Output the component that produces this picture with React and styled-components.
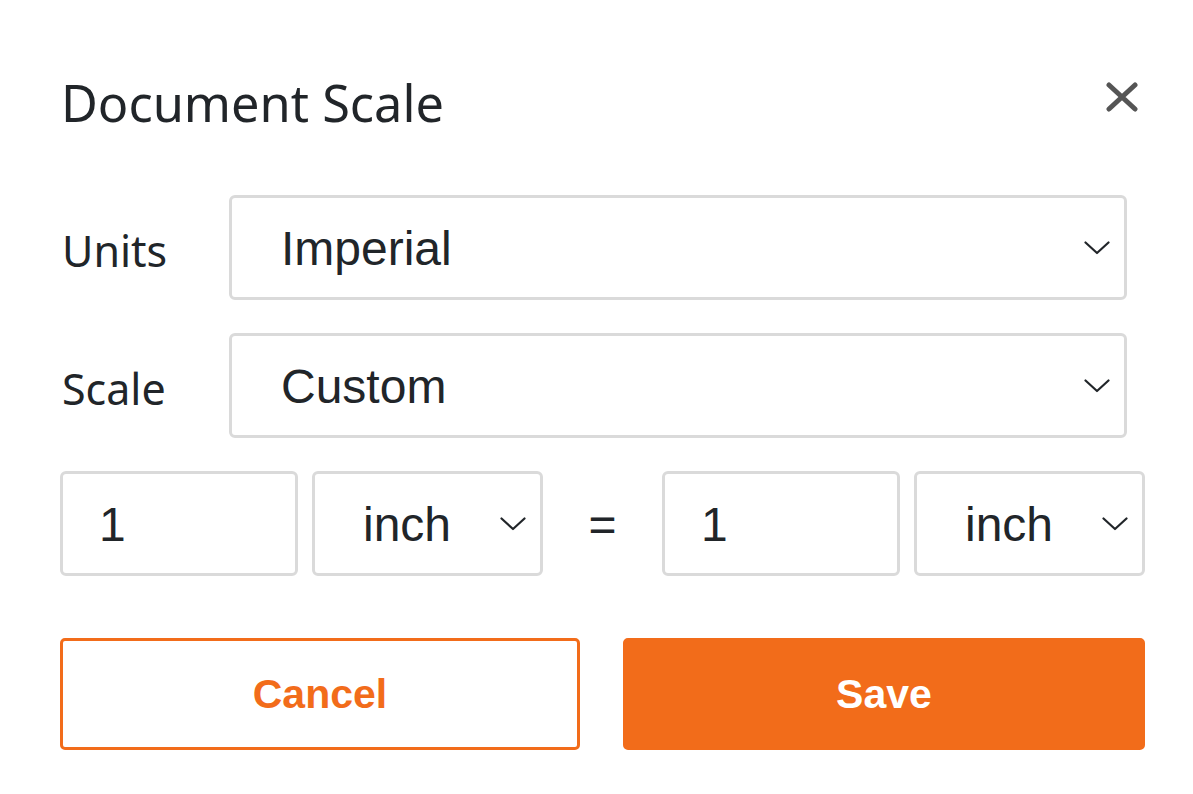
import styled, { createGlobalStyle } from "styled-components";

const GlobalStyle = createGlobalStyle`
  * {
    box-sizing: border-box;
  }
  body {
    margin: 0;
    background: #ffffff;
    font-family: "Liberation Sans", Arial, sans-serif;
    color: #212529;
  }
`;

const orange = "#f26c1a";
const border = "#dadada";

const Dialog = styled.div`
  width: 1193px;
  height: 794px;
  padding: 72px 48px 0 60px;
  display: flex;
  flex-direction: column;
`;

const Header = styled.header`
  display: flex;
  justify-content: space-between;
  align-items: center;
  height: 61px;
`;

const Title = styled.h1`
  margin: 0 0 0 1px;
  font-family: "Noto Sans", "Open Sans", sans-serif;
  font-weight: 400;
  font-size: 50.5px;
  line-height: 61px;
  color: #212529;
`;

const CloseButton = styled.button`
  border: none;
  background: none;
  padding: 0;
  width: 34px;
  height: 34px;
  margin-right: 6px;
  margin-top: -12px;
  display: flex;
  align-items: center;
  justify-content: center;
  cursor: pointer;
`;

const Form = styled.div`
  margin-top: 62px;
  display: flex;
  flex-direction: column;
  gap: 33px;
`;

const FieldRow = styled.div`
  display: grid;
  grid-template-columns: 169px 898px;
  align-items: center;
`;

const Label = styled.label`
  font-family: "Noto Sans", "Open Sans", sans-serif;
  font-size: 43px;
  padding-left: 2px;
  padding-top: 6px;
  color: #212529;
`;

const SelectBox = styled.div`
  height: 105px;
  border: 3px solid ${border};
  border-radius: 6px;
  display: flex;
  align-items: center;
  justify-content: space-between;
  padding: 0 ${(p) => p.$right}px 0 ${(p) => p.$left}px;
  font-size: 48px;
  color: #212529;
  background: #fff;
`;

const Value = styled.span`
  padding-top: 2px;
`;

const ScaleRow = styled.div`
  display: grid;
  grid-template-columns: 238px 231px 1fr 238px 231px;
  column-gap: 14px;
  align-items: center;
`;

const NumberInput = styled.input`
  height: 105px;
  width: 100%;
  border: 3px solid ${border};
  border-radius: 6px;
  padding: 2px 0 0 36px;
  font-family: "Liberation Sans", Arial, sans-serif;
  font-size: 48px;
  color: #212529;
  outline: none;
`;

const Equals = styled.span`
  text-align: center;
  font-size: 48px;
  margin: 0 -14px;
  padding-top: 2px;
`;

const Actions = styled.div`
  margin-top: 62px;
  display: grid;
  grid-template-columns: 520px 522px;
  column-gap: 43px;
`;

const Button = styled.button`
  height: 112px;
  border-radius: 5px;
  border: 3px solid ${orange};
  background: ${(p) => (p.$primary ? orange : "#fff")};
  color: ${(p) => (p.$primary ? "#fff" : orange)};
  font-family: "Liberation Sans", Arial, sans-serif;
  font-weight: 700;
  font-size: 41px;
  padding-top: 2px;
  cursor: pointer;
`;

function Chevron() {
  return (
    <svg width="26" height="14" viewBox="0 0 26 14" fill="none">
      <polyline
        points="1.5,1.5 13,12 24.5,1.5"
        stroke="#212529"
        strokeWidth="2.2"
        strokeLinecap="round"
        strokeLinejoin="round"
      />
    </svg>
  );
}

function CloseIcon() {
  return (
    <svg width="32" height="30" viewBox="0 0 32 30" fill="none">
      <path
        d="M3 3 L29 27 M29 3 L3 27"
        stroke="#555555"
        strokeWidth="5"
        strokeLinecap="round"
      />
    </svg>
  );
}

function Select({ value, left = 49, right = 15 }) {
  return (
    <SelectBox $left={left} $right={right}>
      <Value>{value}</Value>
      <Chevron />
    </SelectBox>
  );
}

export default function App() {
  return (
    <>
      <GlobalStyle />
      <Dialog>
        <Header>
          <Title>Document Scale</Title>
          <CloseButton aria-label="Close">
            <CloseIcon />
          </CloseButton>
        </Header>
        <Form>
          <FieldRow>
            <Label>Units</Label>
            <Select value="Imperial" left={49} right={14} />
          </FieldRow>
          <FieldRow>
            <Label>Scale</Label>
            <Select value="Custom" left={49} right={14} />
          </FieldRow>
          <ScaleRow>
            <NumberInput defaultValue="1" />
            <Select value="inch" left={48} right={14} />
            <Equals>=</Equals>
            <NumberInput defaultValue="1" />
            <Select value="inch" left={48} right={14} />
          </ScaleRow>
        </Form>
        <Actions>
          <Button>Cancel</Button>
          <Button $primary>Save</Button>
        </Actions>
      </Dialog>
    </>
  );
}
